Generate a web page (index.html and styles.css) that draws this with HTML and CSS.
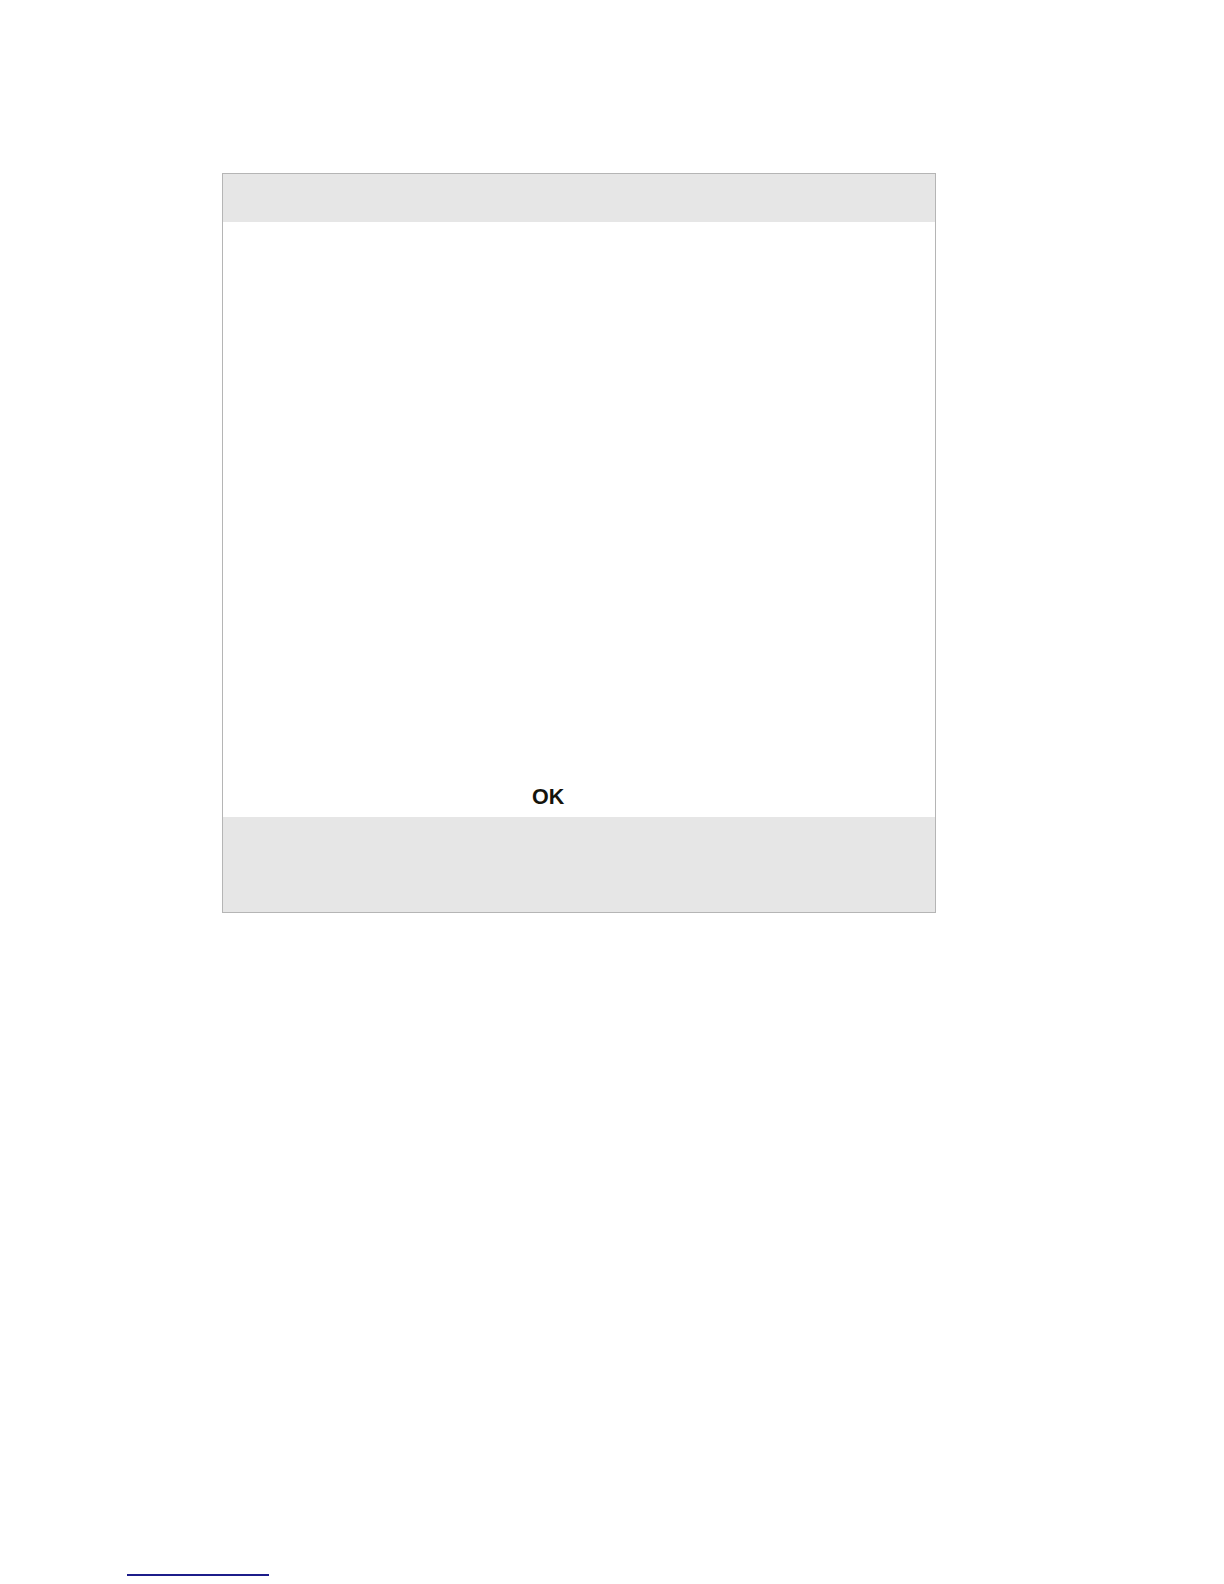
FILE: index.html
```html
<!DOCTYPE html>
<html lang="en">
<head>
<meta charset="utf-8">
<title>Dialog</title>
<link rel="stylesheet" href="styles.css">
</head>
<body>
<div class="page">
  <div class="dialog">
    <div class="dialog-header"></div>
    <div class="dialog-body">
      <span class="ok">OK</span>
    </div>
    <div class="dialog-footer"></div>
  </div>
  <div class="footnote-rule"></div>
</div>
</body>
</html>
```
FILE: styles.css
```css
html, body {
  margin: 0;
  padding: 0;
  background: #ffffff;
}
.page {
  display: flex;
  flex-direction: column;
  padding-top: 173px;
  font-family: "Liberation Sans", Arial, sans-serif;
}
.dialog {
  margin-left: 222px;
  width: 712px;
  border: 1px solid #b5b5b5;
  display: flex;
  flex-direction: column;
}
.dialog-header {
  height: 48px;
  background: #e6e6e6;
}
.dialog-body {
  height: 595px;
  background: #ffffff;
  display: flex;
  flex-direction: column;
  justify-content: flex-end;
  padding-left: 309px;
  box-sizing: border-box;
  padding-bottom: 8px;
}
.ok {
  font-size: 21.5px;
  font-weight: bold;
  line-height: 24px;
  color: #15140c;
}
.dialog-footer {
  height: 95px;
  background: #e6e6e6;
}
.footnote-rule {
  margin-top: 661px;
  margin-left: 127px;
  width: 142px;
  height: 0;
  border-top: 2px solid #1c1c8a;
}
```
